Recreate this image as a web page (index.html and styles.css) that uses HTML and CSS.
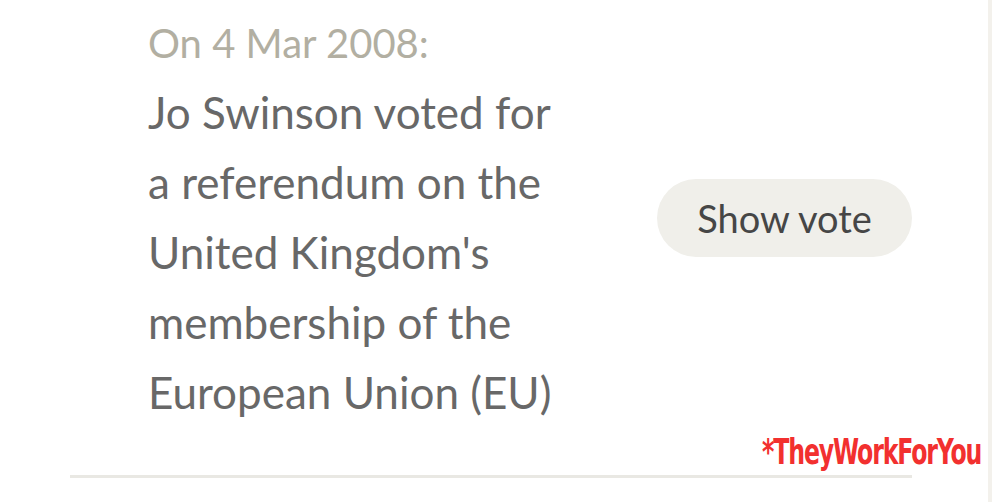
FILE: index.html
```html
<!DOCTYPE html>
<html>
<head>
<meta charset="utf-8">
<link rel="stylesheet" href="styles.css">
</head>
<body>
<div class="page">
  <div class="vote-row">
    <div class="vote-text">
      <p class="date">On 4 Mar 2008:</p>
      <p class="desc">Jo Swinson voted for<br>a referendum on the<br>United Kingdom's<br>membership of the<br>European Union (EU)</p>
    </div>
    <button class="show-vote">Show vote</button>
  </div>
  <hr class="divider">
  <div class="watermark">*TheyWorkForYou</div>
</div>
</body>
</html>
```

FILE: styles.css
```css
html, body {
  margin: 0;
  padding: 0;
  background: #ffffff;
}
.page {
  position: relative;
  width: 992px;
  height: 502px;
  box-sizing: border-box;
  border-right: 4px solid #f3f1ec;
  font-family: Lato, "Noto Sans", sans-serif;
  overflow: hidden;
}
.vote-row {
  display: flex;
  align-items: center;
  padding: 9px 0 0 148px;
}
.vote-text {
  width: 509px;
}
.date, .desc {
  margin: 0;
}
.date {
  color: #b2afa2;
  font-size: 40px;
  line-height: 68px;
}
.desc {
  color: #686868;
  font-size: 44px;
  line-height: 70px;
}
.show-vote {
  width: 255px;
  height: 78px;
  border: none;
  border-radius: 39px;
  background: #f0efea;
  color: #464646;
  font-family: Lato, "Noto Sans", sans-serif;
  font-size: 38px;
  padding: 0;
  margin-top: -1px;
}
.divider {
  margin: 48px 0 0 70px;
  width: 842px;
  border: none;
  height: 3px;
  background: #e9e8e3;
}
.watermark {
  position: absolute;
  left: 762px;
  top: 432px;
  color: #f2302f;
  font-family: "DejaVu Sans", sans-serif;
  font-stretch: condensed;
  font-weight: bold;
  font-size: 35px;
  letter-spacing: -1.5px;
  transform: scaleX(0.75);
  transform-origin: left top;
}
```
